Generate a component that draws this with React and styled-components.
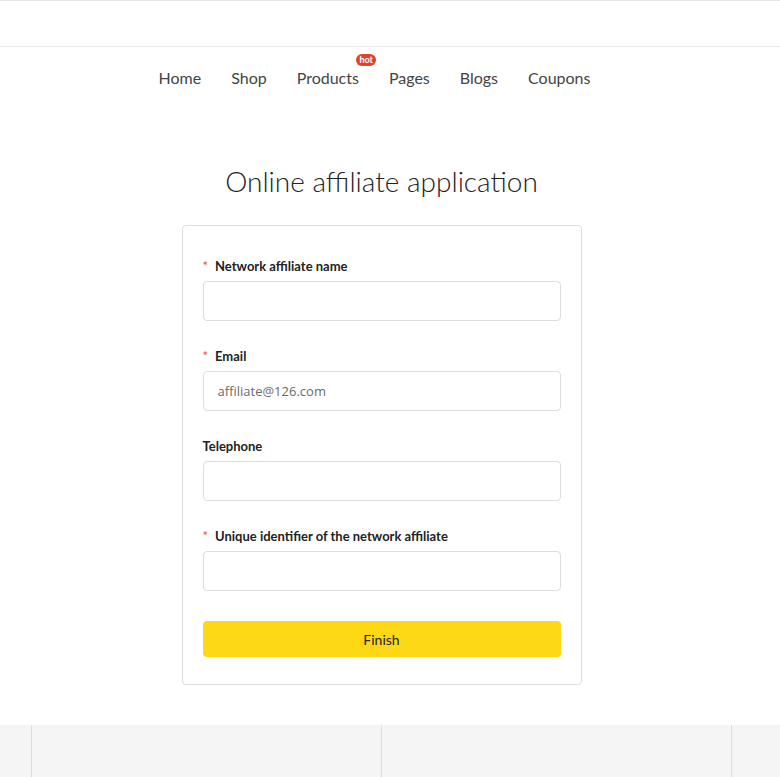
import React from 'react';
import styled, { createGlobalStyle } from 'styled-components';

const GlobalStyle = createGlobalStyle`
  * { box-sizing: border-box; }
  body {
    margin: 0;
    background: #fff;
    font-family: Lato, "Noto Sans", sans-serif;
    color: #222;
  }
`;

const TopBar = styled.header`
  height: 47px;
  border-top: 1px solid #e6e6e6;
  border-bottom: 1px solid #e9e9e9;
`;

const Inner = styled.div`
  width: 763px;
  height: ${(p) => (p.$fill ? '100%' : 'auto')};
`;

const Nav = styled.nav`
  display: flex;
  justify-content: center;
  gap: 30px;
  padding: 20px 0 0 0;
  height: 64px;
  margin-right: 14px;
`;

const NavItem = styled.a`
  position: relative;
  font-size: 16px;
  color: #444;
  text-decoration: none;
  line-height: 22px;
`;

const Badge = styled.span`
  position: absolute;
  top: -13px;
  right: -17px;
  background: #e4402a;
  color: #fff;
  font-size: 9px;
  font-weight: 700;
  line-height: 12px;
  padding: 0 3px;
  border-radius: 6px;
`;

const Main = styled.main`
  display: flex;
  flex-direction: column;
  align-items: center;
  padding: 53px 0 40px;
`;

const Title = styled.h1`
  margin: 0 0 27px;
  font-size: 28px;
  font-weight: 300;
  color: #222;
  line-height: 34px;
`;

const Card = styled.form`
  width: 400px;
  border: 1px solid #ddd;
  border-radius: 4px;
  padding: 32px 20px 27px;
  display: flex;
  flex-direction: column;
  gap: 27px;
`;

const Field = styled.div`
  display: flex;
  flex-direction: column;
  gap: 7px;
`;

const Label = styled.label`
  font-size: 13px;
  font-weight: 700;
  color: #222;
  line-height: 16px;
`;

const Star = styled.span`
  color: #e8503b;
  font-weight: 400;
  margin-right: 7px;
`;

const Input = styled.input`
  height: 40px;
  border: 1px solid #ddd;
  border-radius: 4px;
  padding: 0 14px;
  font-family: "Open Sans", sans-serif;
  font-size: 13px;
  color: #333;
  outline: none;
  &::placeholder { color: #6b6b6b; }
`;

const Button = styled.button`
  margin-top: 3px;
  height: 36px;
  border: none;
  border-radius: 4px;
  background: #fdd915;
  color: #222;
  font-family: Lato, sans-serif;
  font-size: 14px;
  cursor: pointer;
`;

const Footer = styled.footer`
  background: #f5f5f5;
  height: 60px;
`;

const FooterGrid = styled.div`
  margin-left: 31px;
  width: 701px;
  height: 100%;
  display: grid;
  grid-template-columns: 1fr 1fr;
  border-left: 1px solid #dcdcdc;
`;

const FooterCol = styled.div`
  border-right: 1px solid #dcdcdc;
`;

const fields = [
  { label: 'Network affiliate name', required: true },
  { label: 'Email', required: true, placeholder: 'affiliate@126.com' },
  { label: 'Telephone', required: false },
  { label: 'Unique identifier of the network affiliate', required: true },
];

const links = ['Home', 'Shop', 'Products', 'Pages', 'Blogs', 'Coupons'];

export default function App() {
  return (
    <>
      <GlobalStyle />
      <TopBar />
      <Inner>
        <Nav>
          {links.map((l) => (
            <NavItem key={l} href="#">
              {l}
              {l === 'Products' && <Badge>hot</Badge>}
            </NavItem>
          ))}
        </Nav>
        <Main>
          <Title>Online affiliate application</Title>
          <Card onSubmit={(e) => e.preventDefault()}>
            {fields.map((f) => (
              <Field key={f.label}>
                <Label>
                  {f.required && <Star>*</Star>}
                  {f.label}
                </Label>
                <Input placeholder={f.placeholder} />
              </Field>
            ))}
            <Button type="submit">Finish</Button>
          </Card>
        </Main>
      </Inner>
      <Footer>
        <Inner $fill>
          <FooterGrid>
            <FooterCol />
            <FooterCol />
          </FooterGrid>
        </Inner>
      </Footer>
    </>
  );
}
